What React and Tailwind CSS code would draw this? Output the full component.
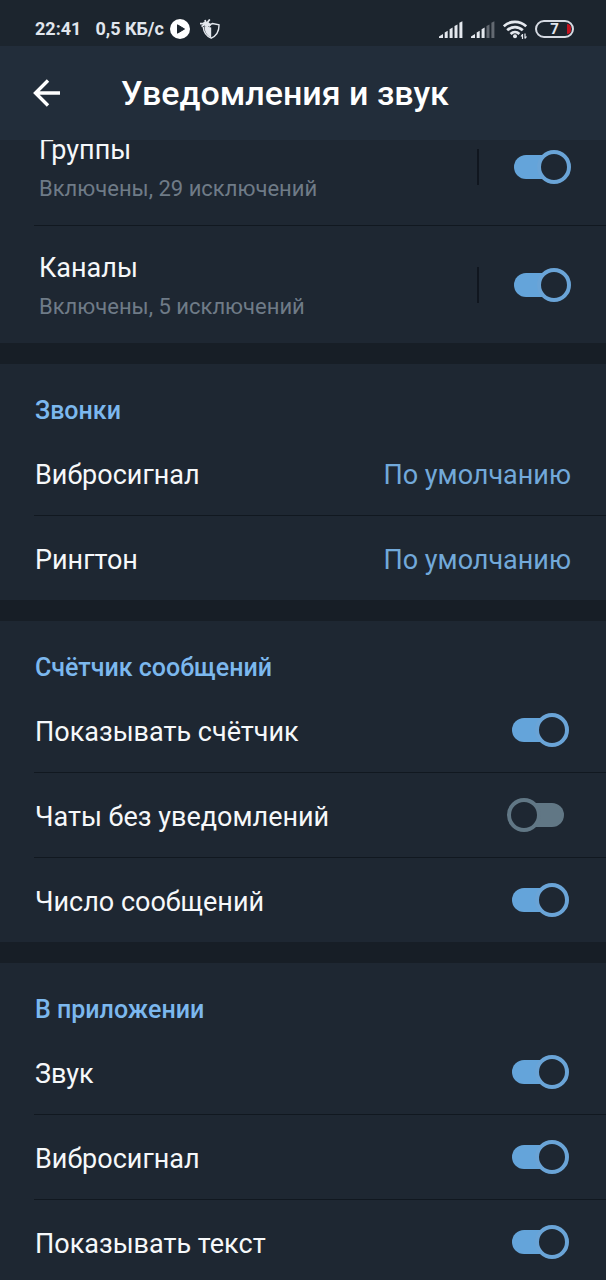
import React,{useState} from "react";

const sections = [
    {
        title: 'Звонки',
        rows: [
            {name: 'Вибросигнал', value: 'По умолчанию'},
            {name: 'Рингтон', value: 'По умолчанию'},
        ],
    },
    {
        title: 'Счётчик сообщений',
        rows: [
            {name: 'Показывать счётчик', on: true},
            {name: 'Чаты без уведомлений', on: false},
            {name: 'Число сообщений', on: true},
        ],
    },
    {
        title: 'В приложении',
        rows: [
            {name: 'Звук', on: true},
            {name: 'Вибросигнал', on: true},
            {name: 'Показывать текст', on: true},
        ],
    },
]

function Signal({level,className}){
    return(
        <svg viewBox="0 0 24 18" className={className} aria-hidden="true">
            <path d="M0 18v-1.500L4 14v4z" fill="#e4e8ee" />
            {
                [1,2,3,4].map((i)=>{
                    const left = i*4.9+0.8
                    const top = 14-i*3.2
                    return(
                        <path key={i} d={`M${left} ${top+1.6}L${left+3} ${top}V18H${left}z`} fill="#e4e8ee" opacity={i<level?1:0.35} />
                    )
                })
            }
        </svg>
    )
}

function StatusBar(){
    return(
        <div className="flex shrink-0 items-center h-[46px] pt-3 pl-[35px] pr-8 bg-[#1c252e] text-lg leading-6 font-bold text-[#e1e6ed]">
            <span>22:41</span>
            <span className="ml-3.5">0,5 КБ/с</span>
            <svg viewBox="0 0 20 20" className="w-5 h-5 ml-1.5" aria-hidden="true">
                <circle cx="10" cy="10" r="10" fill="#fff" />
                <path d="M7.5 5.8v8.4L14.5 10z" fill="#1c252e" stroke="#1c252e" strokeLinejoin="round" />
            </svg>
            <svg viewBox="0 0 20 20" className="w-5 h-5 ml-2.5" fill="none" stroke="#e4e8ee" strokeWidth="1.4" aria-hidden="true">
                <path d="M10 5.600L12.500 4.600l6.500 1.200c.2 6.200-1.400 10.400-7.800 13.400C6.500 17.200 3.800 14 3.200 8" />
                <path d="M4.500 7l6.700 1.500v10C6.800 16.500 4.500 13 4.500 7z" fill="#e4e8ee" stroke="none" />
                <path d="M0 4.600h3.500L8 8M1.500 7.400L4 6M5 1l1.200 3.400L10 7.400M9.800.4L7.400 3.400l3.600 3M3.600 3.200l3 2.600" strokeWidth="1.700" />
            </svg>
            <Signal level={5} className="w-6 h-[18px] ml-auto" />
            <Signal level={3} className="w-6 h-[18px] ml-2" />
            <svg viewBox="0 0 24 19" className="w-6 h-[19px] ml-2" fill="none" stroke="#e4e8ee" aria-hidden="true">
                <path d="M.8 6.300c6.300-6 16.100-6 22.400 0M4.200 10.300c4.600-4.300 11-4.300 15.600 0M7.600 14c2.600-2.500 6.200-2.500 8.800 0" strokeWidth="2.700" />
                <circle cx="12" cy="16.300" r="2" fill="#e4e8ee" stroke="none" />
                <path d="M19.500 14v5M18 16.500l1.500-2M22 13.500v5M23.500 16.500l-1.500 2" strokeWidth="1.200" />
            </svg>
            <span className="relative flex items-center justify-center w-[39px] h-[18px] ml-2 border-2 border-[#d5dae2] rounded-full text-[15px] leading-none">
                7
                <span className="absolute right-px top-0.5 w-1 h-2.5 rounded-r-full bg-[#c4121f]"></span>
            </span>
        </div>
    )
}

function Switch({id,on}){
    const [checked,setChecked] = useState(on)
    return(
        <input
            id={id}
            type="checkbox"
            role="switch"
            checked={checked}
            onChange={(e)=>setChecked(e.target.checked)}
            className="relative shrink-0 appearance-none w-13 h-6 rounded-full bg-[#617785] checked:bg-[#64a4da] before:absolute before:-top-[5px] before:-left-[5px] before:size-[34px] before:rounded-full before:border-4 before:border-[#617785] before:bg-[#1e2732] checked:before:left-auto checked:before:-right-[5px] checked:before:border-[#6aa4d7]"
        />
    )
}

function ChatRow({id,name,info,last}){
    return(
        <div className={last ? "ml-[34px]" : "ml-[34px] border-b border-[#111820]"}>
            <div className="flex items-center h-[117px] pl-[5px] pr-10">
                <label htmlFor={id} className="flex-1 pt-[5px]">
                    <span className="block text-[27px] leading-9 text-[#f6f8fa]">{name}</span>
                    <span className="block pt-[3px] text-[22px] leading-9 text-[#6f7b87]">{info}</span>
                </label>
                <span className="w-0.5 h-9 mr-[35px] bg-[#10161f]"></span>
                <Switch id={id} on={true} />
            </div>
        </div>
    )
}

function Section({title,rows,prefix}){
    return(
        <section className="pt-[29px]">
            <h2 className="pl-[35px] pb-0.5 text-[25px] leading-9 font-medium text-[#7cb8ee]">{title}</h2>
            {
                rows.map((e,i)=>{
                    const id = prefix+'-'+i
                    return(
                        <div key={id} className={i===rows.length-1 ? "ml-[34px]" : "ml-[34px] border-b border-[#111820]"}>
                            {
                                e.value ?
                                <button type="button" className="flex items-center justify-between w-full h-21 pl-px pt-1 pr-[35px] text-[27px] text-left">
                                    <span className="text-[#f6f8fa]">{e.name}</span>
                                    <span className="text-[#72a9da]">{e.value}</span>
                                </button>
                                :
                                <div className="flex items-center h-21 pl-px pr-[42px]">
                                    <label htmlFor={id} className="flex-1 pt-1 text-[27px] text-[#f6f8fa]">{e.name}</label>
                                    <Switch id={id} on={e.on} />
                                </div>
                            }
                        </div>
                    )
                })
            }
        </section>
    )
}

export default function App(){
    return(
        <div className="flex flex-col h-screen overflow-hidden bg-[#1e2732] font-['Roboto',sans-serif]">
            <StatusBar />
            <header className="z-10 flex shrink-0 items-center h-[94px] pl-8 bg-[#222d3a] text-white">
                <button type="button" aria-label="Назад" className="w-[29px] h-7">
                    <svg viewBox="0 0 29 28" className="w-[29px] h-7" fill="none" stroke="currentColor" strokeWidth="3.4">
                        <path d="M28 14H4M16 1.500L3.500 14L16 26.500" />
                    </svg>
                </button>
                <h1 className="ml-15 text-[34px] leading-10 font-medium">Уведомления и звук</h1>
            </header>
            <main className="flex-1 min-h-0 overflow-hidden">
                {/* list is scrolled a bit under the header */}
                <div className="-mt-8">
                    <ChatRow id="groups" name="Группы" info="Включены, 29 исключений" />
                    <ChatRow id="channels" name="Каналы" info="Включены, 5 исключений" last />
                </div>
                {
                    sections.map((e,i)=>(
                        <div key={e.title}>
                            <div className="h-[21px] bg-[#171e26]"></div>
                            <Section title={e.title} rows={e.rows} prefix={'s'+i} />
                        </div>
                    ))
                }
            </main>
        </div>
    )
}
